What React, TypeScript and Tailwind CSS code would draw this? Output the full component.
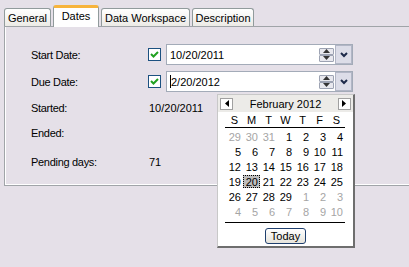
import React from 'react';

const tabs = ['General', 'Dates', 'Data Workspace', 'Description'];
const dayNames = ['S', 'M', 'T', 'W', 'T', 'F', 'S'];

// February 2012 month grid, with grey days from neighbouring months
const weeks: { d: number; out?: boolean }[][] = [
  [{ d: 29, out: true }, { d: 30, out: true }, { d: 31, out: true }, { d: 1 }, { d: 2 }, { d: 3 }, { d: 4 }],
  [{ d: 5 }, { d: 6 }, { d: 7 }, { d: 8 }, { d: 9 }, { d: 10 }, { d: 11 }],
  [{ d: 12 }, { d: 13 }, { d: 14 }, { d: 15 }, { d: 16 }, { d: 17 }, { d: 18 }],
  [{ d: 19 }, { d: 20 }, { d: 21 }, { d: 22 }, { d: 23 }, { d: 24 }, { d: 25 }],
  [{ d: 26 }, { d: 27 }, { d: 28 }, { d: 29 }, { d: 1, out: true }, { d: 2, out: true }, { d: 3, out: true }],
  [4, 5, 6, 7, 8, 9, 10].map((d) => ({ d, out: true })),
];

function Check() {
  return (
    <span className="flex h-[13px] w-[13px] items-center justify-center border border-[#1c5180] bg-white">
      <svg width="9" height="9" viewBox="0 0 9 9">
        <path d="M1 4 L3.5 6.5 L8 2" fill="none" stroke="#21a121" strokeWidth="2" />
      </svg>
    </span>
  );
}

function DateBox({ value, caret }: { value: string; caret?: boolean }) {
  return (
    <div className="ml-[5px] flex h-[21px] w-[187px] items-center border border-[#a3abb8] bg-white">
      <div className="relative flex-1 pl-[3px]">
        {caret && <span className="absolute left-[3px] top-[0px] h-[13px] w-px bg-black" />}
        <span className={caret ? 'pl-[1px]' : ''}>{value}</span>
      </div>
      <div className="mr-px flex h-[14px] w-[15px] flex-col">
        <span className="flex h-[7px] items-center justify-center rounded-[1px] border border-[#9da3b3] bg-[#e8e8ee]">
          <svg width="7" height="4" viewBox="0 0 7 4">
            <path d="M0 4 L3.5 0 L7 4 Z" fill="#333" />
          </svg>
        </span>
        <span className="flex h-[7px] items-center justify-center rounded-[1px] border border-[#9da3b3] bg-[#e8e8ee]">
          <svg width="7" height="4" viewBox="0 0 7 4">
            <path d="M0 0 L3.5 4 L7 0 Z" fill="#333" />
          </svg>
        </span>
      </div>
      <div className="flex h-[19px] w-[17px] items-center justify-center border border-[#b2b6c6] bg-[#dcdde8]">
        <svg width="8" height="6" viewBox="0 0 8 6">
          <path d="M1 1 L4 4 L7 1" fill="none" stroke="#1d2a4a" strokeWidth="2" />
        </svg>
      </div>
    </div>
  );
}

function NavButton({ dir }: { dir: 'left' | 'right' }) {
  return (
    <span className="flex h-[12px] w-[13px] items-center justify-center border border-[#a0a0a0] bg-white">
      <svg width="4" height="7" viewBox="0 0 4 7">
        <path d={dir === 'left' ? 'M4 0 L0 3.5 L4 7 Z' : 'M0 0 L4 3.5 L0 7 Z'} fill="#000" />
      </svg>
    </span>
  );
}

function Calendar() {
  return (
    <div className="absolute left-[217px] top-[94px] h-[154px] w-[138px] border-l border-t border-r-2 border-b-2 border-l-[#c8c8c8] border-t-[#c8c8c8] border-r-[#6e6e6e] border-b-[#6e6e6e] bg-white">
      <div className="flex h-[17px] items-center justify-between bg-[#ecebe8] px-[2px]">
        <NavButton dir="left" />
        <span>February 2012</span>
        <NavButton dir="right" />
      </div>
      <div className="pl-[8px]">
        <div className="grid h-[15px] w-[119px] grid-cols-7 items-center">
          {dayNames.map((n, i) => (
            <span key={i} className="text-center">
              {n}
            </span>
          ))}
        </div>
        <div className="h-px w-[120px] -translate-x-px bg-black" />
        <div className="mt-[1px] w-[119px]">
          {weeks.map((w, r) => (
            <div key={r} className="grid h-[15px] grid-cols-7 items-center">
              {w.map((c, i) =>
                r === 3 && i === 1 ? (
                  <span key={i} className="flex h-[13px] items-center justify-end border border-dotted border-black bg-[#bdbdbd] pr-px">
                    {c.d}
                  </span>
                ) : (
                  <span key={i} className={`pr-[2px] text-right ${c.out ? 'text-[#a5a5a5]' : ''}`}>
                    {c.d}
                  </span>
                ),
              )}
            </div>
          ))}
        </div>
        <div className="mt-[3px] h-px w-[120px] -translate-x-px bg-black" />
      </div>
      <div className="mt-[5px] flex justify-center">
        <button className="flex h-[16px] w-[41px] items-center justify-center rounded-[3px] border border-[#1f3f6e] bg-gradient-to-b from-white to-[#e6e4dc] leading-none">
          Today
        </button>
      </div>
    </div>
  );
}

export default function App() {
  return (
    <div className="relative h-[267px] w-[409px] overflow-hidden bg-[#e5e0e8] font-['Liberation_Sans',Arial,sans-serif] text-[11px] leading-[14px] text-black">
      <div className="pl-[4px] pt-[5px]">
        <div className="flex h-[21px] items-end gap-[2px]">
          {tabs.map((t) =>
            t === 'Dates' ? (
              <div
                key={t}
                className="relative z-10 -mb-px flex h-[22px] w-[46px] items-start justify-center rounded-t-[3px] border-x border-t-[3px] border-x-[#919b9c] border-t-[#f7b43c] bg-white pt-px"
              >
                {t}
              </div>
            ) : (
              <div
                key={t}
                className={`flex h-[18px] items-center justify-center rounded-t-[3px] border-x border-t border-[#919b9c] bg-gradient-to-b from-white to-[#ecebe6] ${
                  t === 'General' ? 'w-[47px]' : t === 'Data Workspace' ? 'w-[89px]' : 'w-[62px]'
                }`}
              >
                {t}
              </div>
            ),
          )}
        </div>
        <div className="h-[160px] border-y border-l border-[#a0a4a8]">
          <div className="h-full border-b border-l border-white pl-[25px] pt-[17px]">
            <div className="flex h-[21px] items-center">
              <span className="w-[117px] tracking-[-0.3px]">Start Date:</span>
              <Check />
              <DateBox value="10/20/2011" />
            </div>
            <div className="mt-[6px] flex h-[21px] items-center">
              <span className="w-[117px] tracking-[-0.3px]">Due Date:</span>
              <Check />
              <DateBox value="2/20/2012" caret />
            </div>
            <div className="mt-[9px] flex h-[14px]">
              <span className="w-[118px] tracking-[-0.3px]">Started:</span>
              <span>10/20/2011</span>
            </div>
            <div className="mt-[11px] flex h-[14px]">
              <span className="w-[118px] tracking-[-0.3px]">Ended:</span>
            </div>
            <div className="mt-[15px] flex h-[14px]">
              <span className="w-[118px] tracking-[-0.3px]">Pending days:</span>
              <span>71</span>
            </div>
          </div>
        </div>
      </div>
      <Calendar />
    </div>
  );
}
